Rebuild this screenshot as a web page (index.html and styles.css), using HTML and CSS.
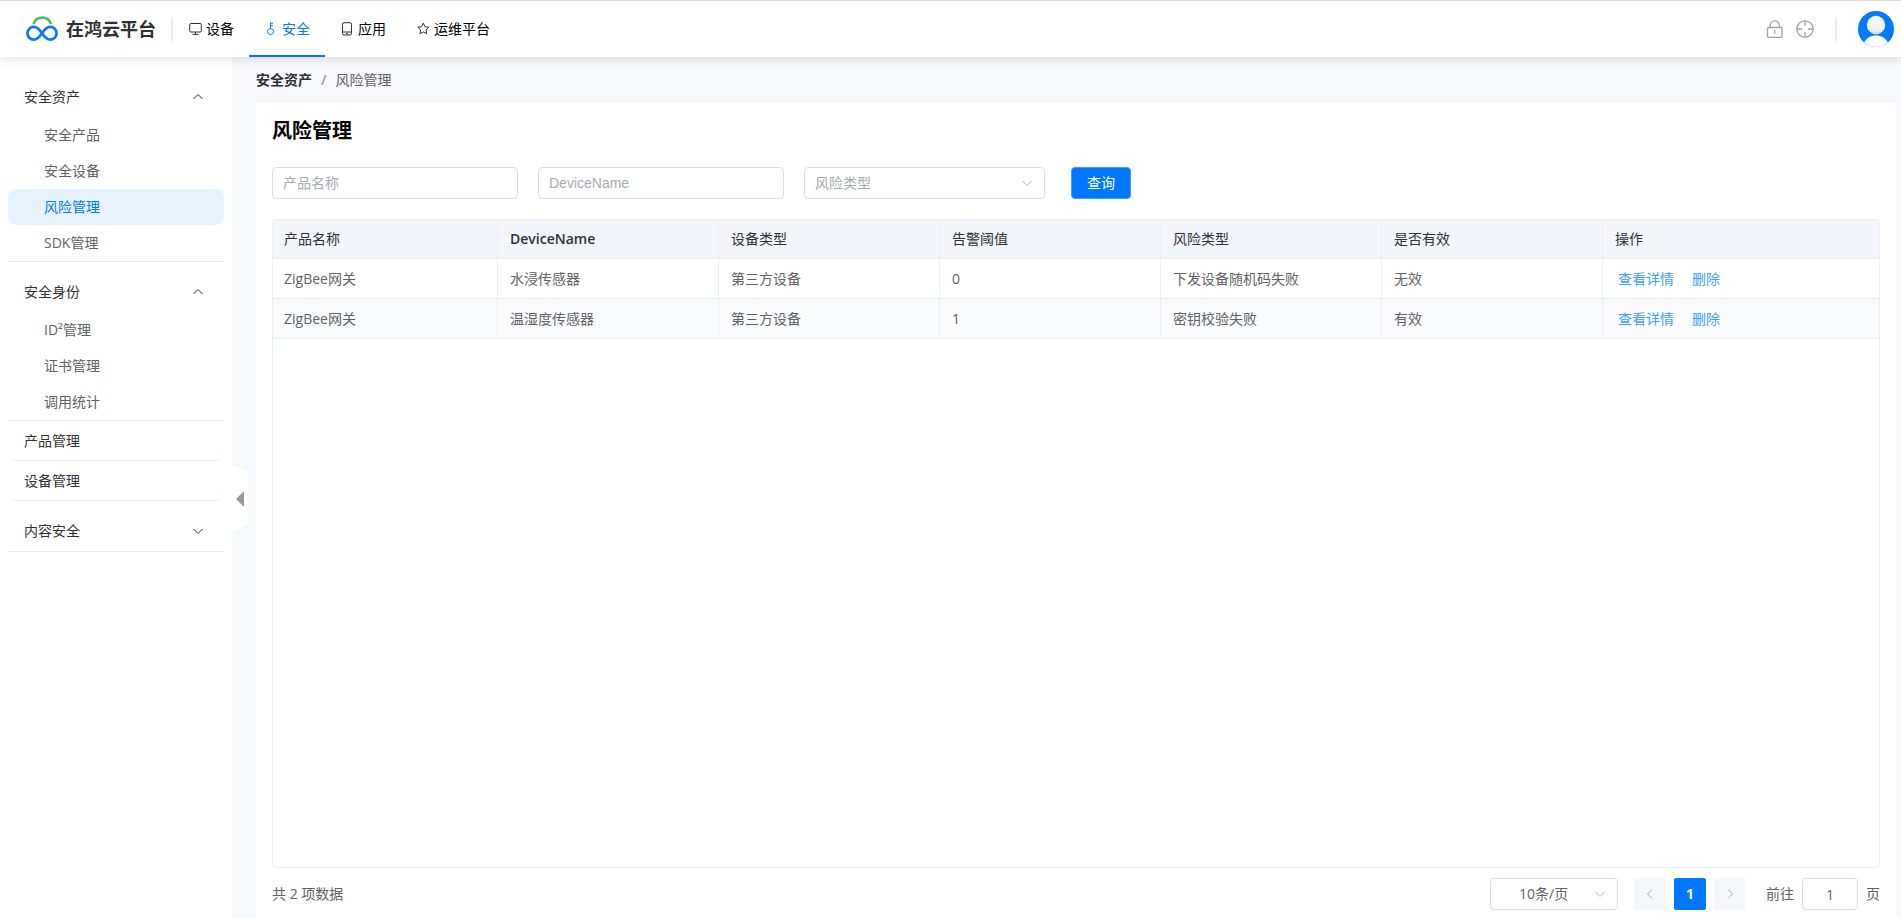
FILE: index.html
```html
<!DOCTYPE html>
<html lang="zh-CN">
<head>
<meta charset="utf-8">
<meta name="viewport" content="width=device-width, initial-scale=1">
<title>在鸿云平台 - 风险管理</title>
<link rel="stylesheet" href="styles.css">
</head>
<body>
<svg class="defs" aria-hidden="true">
  <symbol id="chevron-down" viewBox="0 0 14 14"><path d="M2.500 5 7 9.500 11.500 5" fill="none" stroke="currentColor"/></symbol>
  <symbol id="chevron-up" viewBox="0 0 14 14"><path d="M2.500 9 7 4.500 11.500 9" fill="none" stroke="currentColor"/></symbol>
</svg>

<header class="topbar">
  <div class="brand">
    <svg class="brand-logo" viewBox="0 0 32 26" aria-hidden="true">
      <path d="M7.500 8A9.200 9.200 0 0 1 25 8" fill="none" stroke="#45bf6a" stroke-width="2.600"/>
      <path d="M16 17.300c-2.500-3.800-4.600-6.400-8.200-6.400a6.400 6.400 0 1 0 0 12.800c3.600 0 5.700-2.600 8.200-6.400Zm0 0c2.500 3.800 4.600 6.400 8.200 6.400a6.400 6.400 0 1 0 0-12.800c-3.600 0-5.700 2.600-8.200 6.400Z" fill="none" stroke="#0a78f0" stroke-width="2.700"/>
    </svg>
    <span class="brand-name">在鸿云平台</span>
  </div>
  <span class="divider"></span>
  <nav class="topnav">
    <a class="topnav-item" href="#">
      <svg class="topnav-icon" viewBox="0 0 14 14" fill="none" stroke="#303133" aria-hidden="true"><rect x=".7" y="1.500" width="11.600" height="8.500" rx="1.200"/><path d="M6.500 10v2.300M3.500 12.400h6"/></svg>
      <span>设备</span>
    </a>
    <a class="topnav-item is-active" href="#">
      <svg class="topnav-icon" viewBox="0 0 14 14" fill="none" stroke="currentColor" aria-hidden="true"><circle cx="5.500" cy="9.500" r="3"/><path d="M5.500 6.500V.6M5.500 1.200H8M5.500 3.700H8"/></svg>
      <span>安全</span>
    </a>
    <a class="topnav-item" href="#">
      <svg class="topnav-icon" viewBox="0 0 14 14" fill="none" stroke="#303133" aria-hidden="true"><rect x="1.500" y=".7" width="9" height="12.300" rx="1.500"/><path d="M1.500 10h9M5 11.600h2"/></svg>
      <span>应用</span>
    </a>
    <a class="topnav-item" href="#">
      <svg class="topnav-icon" viewBox="0 0 14 14" fill="none" stroke="#303133" stroke-linejoin="round" aria-hidden="true"><path d="m6.300 1.200 1.700 3.500 3.800.5L9 7.900l.7 3.900-3.400-1.900-3.400 1.900.7-3.900L.8 5.200l3.800-.5Z"/></svg>
      <span>运维平台</span>
    </a>
  </nav>
  <div class="tools">
    <button class="tool" type="button" aria-label="锁屏">
      <svg viewBox="0 0 18 18" fill="none" stroke="#a3a3a3" stroke-width="1.300"><rect x="1.500" y="7.500" width="14.500" height="9.800" rx="1.200"/><path d="M4.300 7.500V5.300a4.500 4.500 0 0 1 9 0v2.200M8.800 10v4"/></svg>
    </button>
    <button class="tool" type="button" aria-label="定位">
      <svg viewBox="0 0 18 18" fill="none" stroke="#a3a3a3" stroke-width="1.300"><circle cx="9" cy="9" r="8.200"/><path d="M9 1v5M9 12v5M1 9h5M12 9h5"/></svg>
    </button>
    <span class="divider"></span>
    <button class="avatar" type="button" aria-label="用户">
      <svg viewBox="0 0 36 36">
        <defs>
          <clipPath id="avatar-clip"><circle cx="18" cy="18" r="18"/></clipPath>
          <linearGradient id="head-fill" x1="0" y1="0" x2="0" y2="1"><stop offset="0" stop-color="#fafafa"/><stop offset=".7" stop-color="#f0f1f2"/><stop offset="1" stop-color="#dddfe2"/></linearGradient>
        </defs>
        <g clip-path="url(#avatar-clip)"><rect width="36" height="36" fill="#007bff"/><path d="M6 32c2-5 6.500-7.500 12-7.500S28 27 30 32l-2 5H8Z" fill="#fff"/><circle cx="18" cy="14" r="9.200" fill="url(#head-fill)"/></g>
      </svg>
    </button>
  </div>
</header>

<div class="layout">
  <aside class="sidebar">
    <nav class="menu">
      <section class="group">
        <button class="group-title" type="button"><span>安全资产</span><svg class="chevron"><use href="#chevron-up"/></svg></button>
        <a class="menu-item" href="#">安全产品</a>
        <a class="menu-item" href="#">安全设备</a>
        <a class="menu-item is-current" href="#">风险管理</a>
        <a class="menu-item" href="#">SDK管理</a>
      </section>
      <section class="group">
        <button class="group-title" type="button"><span>安全身份</span><svg class="chevron"><use href="#chevron-up"/></svg></button>
        <a class="menu-item" href="#">ID²管理</a>
        <a class="menu-item" href="#">证书管理</a>
        <a class="menu-item" href="#">调用统计</a>
      </section>
      <a class="single-item" href="#">产品管理</a>
      <a class="single-item" href="#">设备管理</a>
      <section class="group">
        <button class="group-title" type="button"><span>内容安全</span><svg class="chevron"><use href="#chevron-down"/></svg></button>
      </section>
    </nav>
    <button class="collapse" type="button" aria-label="收起菜单">
      <svg viewBox="0 0 16 66"><path d="M0 0 16 6V60L0 66Z" fill="#fff"/><path d="M4 34 12 26V42Z" fill="#999"/></svg>
    </button>
  </aside>

  <main class="main">
    <nav class="breadcrumb"><a href="#">安全资产</a><span class="slash">/</span><span>风险管理</span></nav>
    <section class="card">
      <h1 class="card-title">风险管理</h1>
      <form class="filters">
        <input class="field" type="text" placeholder="产品名称" aria-label="产品名称">
        <input class="field" type="text" placeholder="DeviceName" aria-label="DeviceName">
        <div class="select-box risk-select">
          <select class="is-placeholder" aria-label="风险类型"><option>风险类型</option></select>
          <svg class="chevron"><use href="#chevron-down"/></svg>
        </div>
        <button class="search" type="button">查询</button>
      </form>

      <div class="table-box">
        <table class="table">
          <colgroup><col class="col-name"><col><col><col><col><col><col class="col-actions"></colgroup>
          <thead>
            <tr><th>产品名称</th><th class="latin">DeviceName</th><th>设备类型</th><th>告警阈值</th><th>风险类型</th><th>是否有效</th><th>操作</th></tr>
          </thead>
          <tbody>
            <tr><td>ZigBee网关</td><td>水浸传感器</td><td>第三方设备</td><td>0</td><td>下发设备随机码失败</td><td>无效</td><td><div class="actions"><a href="#">查看详情</a><a href="#">删除</a></div></td></tr>
            <tr><td>ZigBee网关</td><td>温湿度传感器</td><td>第三方设备</td><td>1</td><td>密钥校验失败</td><td>有效</td><td><div class="actions"><a href="#">查看详情</a><a href="#">删除</a></div></td></tr>
          </tbody>
        </table>
      </div>

      <footer class="pager">
        <span>共 2 项数据</span>
        <div class="pager-controls">
          <div class="select-box size-select">
            <select aria-label="每页条数"><option>10条/页</option></select>
            <svg class="chevron"><use href="#chevron-down"/></svg>
          </div>
          <div class="pages">
            <button class="page" type="button" aria-label="上一页" disabled><svg viewBox="0 0 14 14"><path d="M9 2.500 4.500 7 9 11.500" fill="none" stroke="currentColor"/></svg></button>
            <button class="page is-current" type="button">1</button>
            <button class="page" type="button" aria-label="下一页" disabled><svg viewBox="0 0 14 14"><path d="M5 2.500 9.500 7 5 11.500" fill="none" stroke="currentColor"/></svg></button>
          </div>
          <label class="jump">前往<input type="text" value="1">页</label>
        </div>
      </footer>
    </section>
  </main>
</div>
</body>
</html>
```
FILE: styles.css
```css
* {
  box-sizing: border-box;
}

body {
  margin: 0;
  height: 100vh;
  display: flex;
  flex-direction: column;
  background: #f6f8fc;
  color: #606266;
  font-family: "Open Sans", "Noto Sans CJK SC", sans-serif;
  font-size: 14px;
  line-height: 20px;
}

a {
  color: inherit;
  text-decoration: none;
}

button,
input,
select {
  margin: 0;
  padding: 0;
  border: 0;
  background: none;
  color: inherit;
  font: inherit;
}

svg {
  display: block;
}

.defs {
  position: absolute;
  width: 0;
  height: 0;
}

.topbar {
  position: relative;
  z-index: 1;
  flex: none;
  display: flex;
  align-items: center;
  height: 57px;
  padding: 0 7px 0 26px;
  border-top: 1px solid #dcdcdc;
  background: #fff;
  box-shadow: 0 2px 10px rgba(0, 0, 0, 0.12);
}

.brand {
  display: flex;
  align-items: center;
  gap: 8px;
  margin-right: 15px;
}

.brand-logo {
  width: 32px;
  height: 26px;
}

.brand-name {
  color: #303133;
  font-size: 18px;
  font-weight: 700;
}

.divider {
  width: 2px;
  height: 24px;
  background: #ebebeb;
}

.topnav {
  display: flex;
  align-self: stretch;
}

.topnav-item {
  display: flex;
  align-items: center;
  gap: 3px;
  padding: 0 15px 0 16px;
  border-bottom: 2px solid transparent;
  border-top: 2px solid transparent;
  color: #000;
}

.topnav-item.is-active {
  border-bottom-color: #0077ff;
  color: #0077ff;
}

.topnav-icon {
  width: 14px;
  height: 14px;
}

.tools {
  display: flex;
  align-items: center;
  margin-left: auto;
}

.tool {
  width: 18px;
  height: 18px;
  margin-right: 12px;
}

.tools .divider {
  margin: 0 21px 0 9px;
}

.avatar {
  width: 36px;
  height: 36px;
}

.layout {
  flex: 1;
  display: flex;
  min-height: 0;
}

.sidebar {
  position: relative;
  flex: none;
  width: 232px;
  padding: 10px 8px;
  background: #fff;
}

.group {
  padding-top: 10px;
  border-bottom: 1px solid #ebebeb;
}

.group-title {
  display: flex;
  align-items: center;
  justify-content: space-between;
  width: 100%;
  height: 40px;
  padding: 0 19px 0 16px;
  color: #303133;
}

.chevron {
  width: 14px;
  height: 14px;
}

.menu-item {
  display: flex;
  align-items: center;
  height: 36px;
  padding-left: 36px;
  border-radius: 8px;
}

.menu-item.is-current {
  background: #e6f3ff;
  color: #0077ff;
}

.single-item {
  display: flex;
  align-items: center;
  height: 40px;
  padding-left: 16px;
  border-bottom: 1px solid #ebebeb;
  border-radius: 8px;
  color: #303133;
}

.collapse {
  position: absolute;
  z-index: 1;
  top: calc(50% - 23px);
  left: 100%;
  width: 16px;
  height: 66px;
}

.main {
  flex: 1;
  display: flex;
  flex-direction: column;
  min-width: 0;
  padding: 13px 5px 0 24px;
}

.breadcrumb {
  display: flex;
  margin-bottom: 13px;
}

.breadcrumb a {
  color: #303133;
  font-weight: 700;
}

.slash {
  margin: 0 9px;
  color: #999;
  font-weight: 600;
}

.card {
  flex: 1;
  display: flex;
  flex-direction: column;
  padding: 13px 16px 8px;
  background: #fff;
}

.card-title {
  margin: 0 0 21px;
  color: #000;
  font-size: 20px;
  font-weight: 700;
  line-height: 30px;
}

.filters {
  display: flex;
  gap: 20px;
  margin-bottom: 20px;
}

.field,
.select-box,
.jump input {
  height: 32px;
  border: 1px solid #dcdfe6;
  border-radius: 4px;
  background: #fff;
}

.field {
  width: 246px;
  padding: 0 10px;
  font-family: "Liberation Sans", "Noto Sans CJK SC", sans-serif;
}

.field::placeholder,
.is-placeholder {
  color: #a8abb2;
}

.select-box {
  display: grid;
  align-items: center;
}

.select-box select,
.select-box .chevron {
  grid-area: 1 / 1;
}

.select-box select {
  width: 100%;
  height: 30px;
  padding-left: 10px;
  appearance: none;
}

.select-box .chevron {
  justify-self: end;
  margin-right: 10px;
  color: #b4b7bd;
  pointer-events: none;
}

.risk-select {
  width: 241px;
}

.search {
  width: 60px;
  height: 32px;
  margin-left: 6px;
  border: 1px solid #409eff;
  border-radius: 4px;
  background: #0077ff;
  color: #fff;
}

.table-box {
  flex: 1;
  overflow: hidden;
  border: 1px solid #ebeef5;
  border-radius: 4px;
}

.table {
  width: 100%;
  table-layout: fixed;
  border-collapse: separate;
  border-spacing: 0;
}

.col-name {
  width: 225px;
}

.col-actions {
  width: 276px;
}

.table th,
.table td {
  height: 40px;
  padding: 0 12px;
  border-right: 1px solid #ebeef5;
  border-bottom: 1px solid #ebeef5;
  text-align: left;
  font-weight: 400;
}

.table th {
  height: 39px;
  background: #f2f5fa;
  color: #303133;
}

.table th.latin {
  font-weight: 600;
}

.table th:first-child,
.table td:first-child {
  padding-left: 11px;
}

.table th:last-child,
.table td:last-child {
  border-right: 0;
}

.table tbody tr:nth-child(even) {
  background: #fafbfd;
}

.actions {
  display: flex;
  gap: 18px;
  padding: 1px 3px 0;
  color: #409eff;
}

.pager {
  display: flex;
  align-items: center;
  justify-content: space-between;
  padding-top: 10px;
}

.pager-controls,
.pages,
.jump {
  display: flex;
  align-items: center;
}

.size-select {
  width: 128px;
}

.size-select select {
  padding-left: 28px;
}

.pages {
  gap: 8px;
  margin: 0 20px 0 16px;
}

.page {
  display: grid;
  place-items: center;
  width: 32px;
  height: 32px;
  border-radius: 2px;
  background: #f5f7fa;
  color: #a8abb2;
}

.page svg {
  width: 14px;
  height: 14px;
}

.page.is-current {
  background: #0077ff;
  color: #fff;
  font-weight: 700;
}

.jump {
  gap: 8px;
}

.jump input {
  width: 56px;
  text-align: center;
}
```
